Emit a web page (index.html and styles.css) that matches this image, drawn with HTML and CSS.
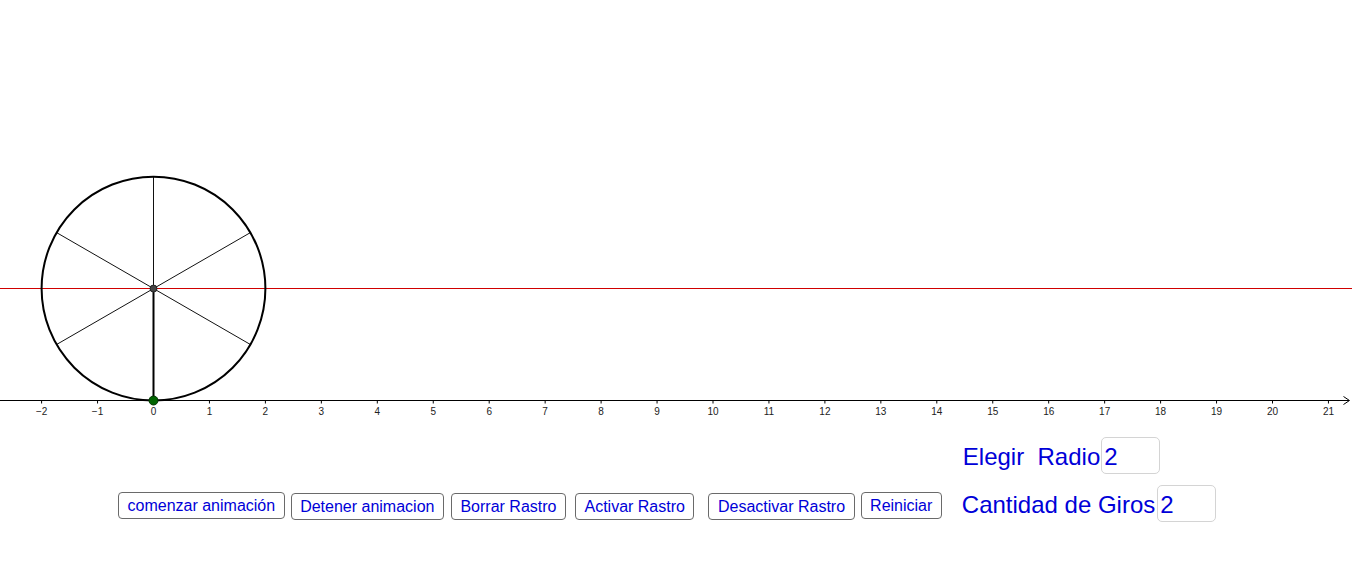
FILE: index.html
```html
<!DOCTYPE html>
<html lang="es">
<head>
<meta charset="utf-8">
<title>Rueda</title>
<link rel="stylesheet" href="styles.css">
</head>
<body>
<main class="applet">
  <svg class="graphics" width="1352" height="430" viewBox="0 0 1352 430" xmlns="http://www.w3.org/2000/svg">
    <line x1="0" y1="288.5" x2="1352" y2="288.5" stroke="#d00000" stroke-width="1"/>
    <line x1="0" y1="400.5" x2="1349" y2="400.5" stroke="#000" stroke-width="1"/>
    <polyline points="1343.5,396.5 1349.5,400.5 1343.5,404.5" fill="none" stroke="#000" stroke-width="1"/>
    <path d="M41.6 400.5v3M97.55 400.5v3M153.5 400.5v3M209.45 400.5v3M265.4 400.5v3M321.35 400.5v3M377.3 400.5v3M433.25 400.5v3M489.2 400.5v3M545.15 400.5v3M601.1 400.5v3M657.05 400.5v3M713 400.5v3M768.95 400.5v3M824.9 400.5v3M880.85 400.5v3M936.8 400.5v3M992.75 400.5v3M1048.7 400.5v3M1104.65 400.5v3M1160.6 400.5v3M1216.55 400.5v3M1272.5 400.5v3M1328.45 400.5v3" stroke="#000" stroke-width="1"/>
    <g class="ticklabels" text-anchor="middle">
      <text x="41.6" y="414.5">−2</text>
      <text x="97.55" y="414.5">−1</text>
      <text x="153.5" y="414.5">0</text>
      <text x="209.45" y="414.5">1</text>
      <text x="265.4" y="414.5">2</text>
      <text x="321.35" y="414.5">3</text>
      <text x="377.3" y="414.5">4</text>
      <text x="433.25" y="414.5">5</text>
      <text x="489.2" y="414.5">6</text>
      <text x="545.15" y="414.5">7</text>
      <text x="601.1" y="414.5">8</text>
      <text x="657.05" y="414.5">9</text>
      <text x="713" y="414.5">10</text>
      <text x="768.95" y="414.5">11</text>
      <text x="824.9" y="414.5">12</text>
      <text x="880.85" y="414.5">13</text>
      <text x="936.8" y="414.5">14</text>
      <text x="992.75" y="414.5">15</text>
      <text x="1048.7" y="414.5">16</text>
      <text x="1104.65" y="414.5">17</text>
      <text x="1160.6" y="414.5">18</text>
      <text x="1216.55" y="414.5">19</text>
      <text x="1272.5" y="414.5">20</text>
      <text x="1328.45" y="414.5">21</text>
    </g>
    <g stroke="#111" stroke-width="1">
      <line x1="153.5" y1="288.55" x2="153.5" y2="176.65"/>
      <line x1="153.5" y1="288.55" x2="250.4" y2="232.6"/>
      <line x1="153.5" y1="288.55" x2="56.6" y2="232.6"/>
      <line x1="153.5" y1="288.55" x2="56.6" y2="344.5"/>
      <line x1="153.5" y1="288.55" x2="250.4" y2="344.5"/>
    </g>
    <line x1="153.5" y1="288.55" x2="153.5" y2="400.5" stroke="#000" stroke-width="2"/>
    <circle cx="153.5" cy="288.55" r="111.9" fill="none" stroke="#000" stroke-width="2"/>
    <circle cx="153.5" cy="288.55" r="3.5" fill="#444" stroke="#222" stroke-width="1"/>
    <circle cx="153.5" cy="400.5" r="4.5" fill="#006400" stroke="#003300" stroke-width="1"/>
  </svg>
  <section class="controls">
    <div class="buttons">
      <button class="btn btn-first">comenzar animación</button>
      <button class="btn gap-s">Detener animacion</button>
      <button class="btn">Borrar Rastro</button>
      <button class="btn gap-m">Activar Rastro</button>
      <button class="btn gap-l">Desactivar Rastro</button>
      <button class="btn gap-s btn-up">Reiniciar</button>
    </div>
    <div class="fields">
      <label class="field field-radio"><span class="field-label">Elegir&nbsp; Radio</span><input class="field-input" type="text" value="2"></label>
      <label class="field field-giros"><span class="field-label">Cantidad de Giros</span><input class="field-input" type="text" value="2"></label>
    </div>
  </section>
</main>
</body>
</html>
```

FILE: styles.css
```css
* { box-sizing: border-box; }

html, body {
  margin: 0;
  padding: 0;
  background: #fff;
}

.applet {
  width: 1352px;
  height: 563px;
  overflow: hidden;
  background: #fff;
  font-family: "Liberation Sans", Arial, sans-serif;
}

.graphics {
  display: block;
}

.ticklabels {
  font-family: "Liberation Sans", Arial, sans-serif;
  font-size: 10px;
  fill: #222;
}

.controls {
  display: flex;
  align-items: flex-start;
  height: 133px;
}

.buttons {
  display: flex;
  align-items: flex-start;
  margin-left: 118px;
  margin-top: 63px;
}

.btn {
  height: 27px;
  padding: 0 8.5px;
  margin-left: 7px;
  border: 1px solid #6a6a6a;
  border-radius: 4px;
  background: #fff;
  color: #0000d8;
  font-family: "Liberation Sans", Arial, sans-serif;
  font-size: 16px;
  line-height: 25px;
  white-space: nowrap;
  cursor: pointer;
}

.btn-first {
  margin-left: 0;
  margin-top: -1px;
}

.btn-up {
  margin-top: -1px;
}

.gap-m { margin-left: 9px; }
.gap-l { margin-left: 14px; }
.gap-s { margin-left: 6px; }

.fields {
  display: flex;
  flex-direction: column;
  margin-left: 20px;
  margin-top: 7px;
}

.field {
  display: flex;
  align-items: center;
  gap: 1px;
}

.field-radio {
  padding-left: 1px;
}

.field-giros {
  margin-top: 11px;
  gap: 2px;
}

.field-label {
  color: #0000d8;
  font-size: 24px;
  line-height: 28px;
  padding-top: 3px;
  white-space: nowrap;
}

.field-input {
  width: 59px;
  height: 37px;
  padding: 2px 0 0 2px;
  border: 1px solid #d4d4d4;
  border-radius: 5px;
  background: #fff;
  color: #0000d8;
  font-family: "Liberation Sans", Arial, sans-serif;
  font-size: 24px;
  outline: none;
}
```
